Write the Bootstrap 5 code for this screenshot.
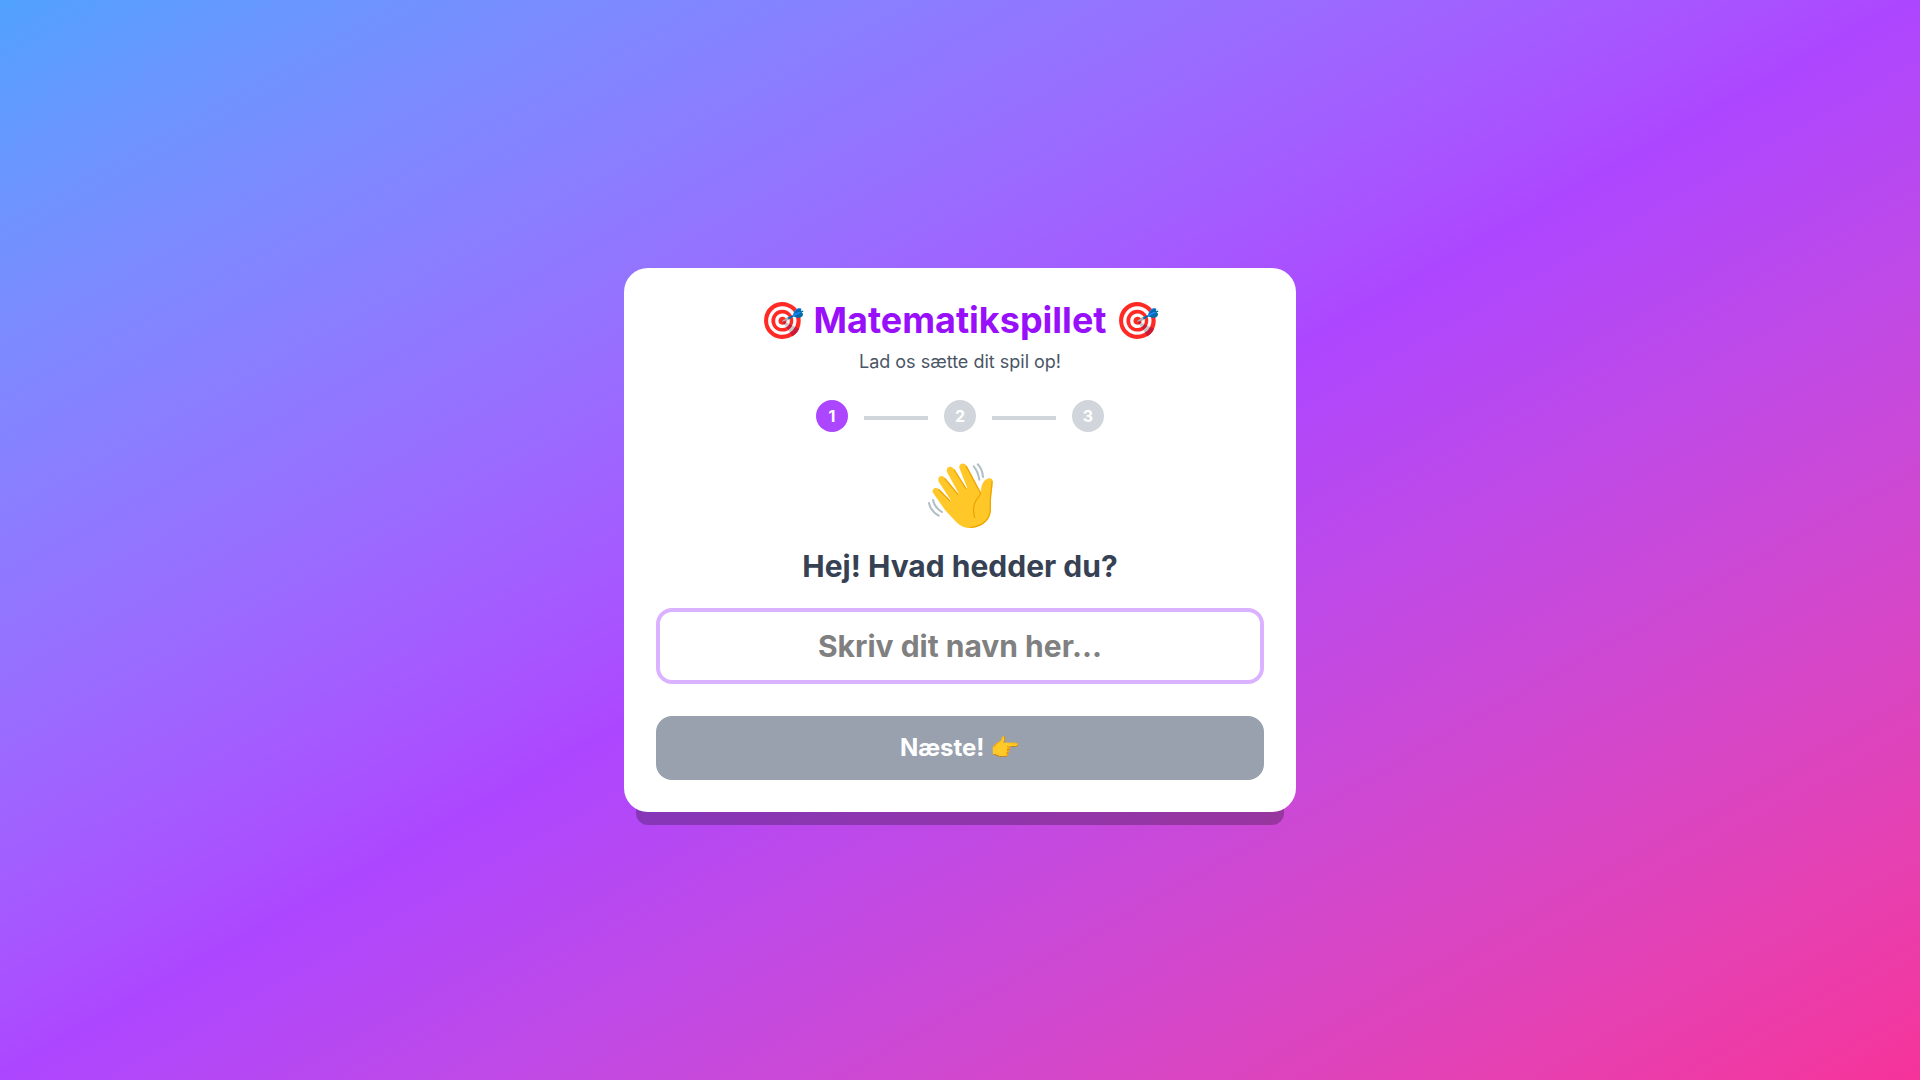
<!DOCTYPE html>
<html lang="da">
<head>
<meta charset="utf-8">
<meta name="viewport" content="width=device-width, initial-scale=1">
<title>Matematikspillet</title>
<link href="https://cdn.jsdelivr.net/npm/bootstrap@5.3.0/dist/css/bootstrap.min.css" rel="stylesheet">
<style>
body{font-family:Inter,"Noto Sans",sans-serif;line-height:24px}
.game-bg{background:linear-gradient(to bottom right in oklab,#50a2ff 0%,#ad46ff 50%,#f6339a 100%)}
.game-card{max-width:672px;padding:32px;border-radius:24px;box-shadow:0 25px 0 -12px rgba(0,0,0,.25)}
.game-title{font-size:36px;line-height:40px;color:#9810fa}
.game-sub{font-size:18px;line-height:28px;color:#4a5565}
.step-dot{width:32px;height:32px;font-size:16px;background:#d1d5dc}
.step-dot.active{background:#ad46ff}
.step-line{width:64px;height:4px;background:#d1d5dc}
.wave{width:100px;height:76px}
.ask{font-size:30px;line-height:36px;color:#364153}
.name-field{font-size:30px;line-height:36px;border:4px solid #dab2ff;border-radius:16px;padding:16px}
.name-field::placeholder{color:#808080;opacity:1}
.next-btn{margin-top:32px;padding:16px;border:0;font-size:24px;line-height:32px;border-radius:16px;background:#99a1af}
</style>
</head>
<body>
<main class="game-bg min-vh-100 d-flex align-items-center justify-content-center p-3">
<form class="game-card bg-white w-100 text-center">
<h1 class="game-title fw-bold mb-2">🎯 Matematikspillet 🎯</h1>
<p class="game-sub mb-4">Lad os sætte dit spil op!</p>
<div class="d-flex justify-content-center align-items-start gap-3 mb-4 text-white fw-bold">
<div class="step-dot active rounded-circle d-flex align-items-center justify-content-center">1</div>
<div class="step-line mt-3"></div>
<div class="step-dot rounded-circle d-flex align-items-center justify-content-center">2</div>
<div class="step-line mt-3"></div>
<div class="step-dot rounded-circle d-flex align-items-center justify-content-center">3</div>
</div>
<svg class="wave d-block mx-auto mb-3" viewBox="0 18 300 228" role="img" aria-label="👋">
<path fill="#ffc828" d="M70 130C65 122 69 115 76 114C81 113 85 116 89 120L120 154Q123 156 122 150L87 97C83 89 85 82 91 79C97 77 101 80 105 85L142 131Q146 134 145 128L112 68C108 60 111 53 117 51C124 49 129 52 133 59L167 115Q172 119 171 112L149 56C146 49 149 43 155 41C162 39 167 43 171 50L211 131L214 112C217 98 223 90 232 86C241 83 248 86 248 94C248 112 243 132 243 151C243 184 244 199 228 214C215 228 200 234 181 234C161 234 147 225 135 212L105 180Z"/>
<g fill="none" stroke="#eda600" stroke-width="4" stroke-linecap="round" stroke-linejoin="round">
<path d="M169 49L211 128Q212 134 205 142C190 158 188 180 194 202"/>
<path d="M133 60L168 116M105 86L143 132M87 119L120 153"/>
<path d="M246 94C246 112 241 132 241 151C241 184 242 198 227 213C214 226 199 232 181 232"/>
</g>
<path fill="none" stroke="#b0bec5" stroke-width="6" stroke-linecap="round" d="M191 49Q204 63 208 89M203 43Q217 56 219 81M69 150Q74 173 96 186M57 159Q62 183 86 197"/>
</svg>
<label for="navn" class="ask fw-bold d-block mb-4">Hej! Hvad hedder du?</label>
<input id="navn" type="text" class="name-field d-block w-100 fw-bold text-center" placeholder="Skriv dit navn her...">
<button type="button" class="next-btn btn d-block w-100 text-white fw-bold">Næste! 👉</button>
</form>
</main>
<script src="https://cdn.jsdelivr.net/npm/bootstrap@5.3.0/dist/js/bootstrap.bundle.min.js"></script>
</body>
</html>
